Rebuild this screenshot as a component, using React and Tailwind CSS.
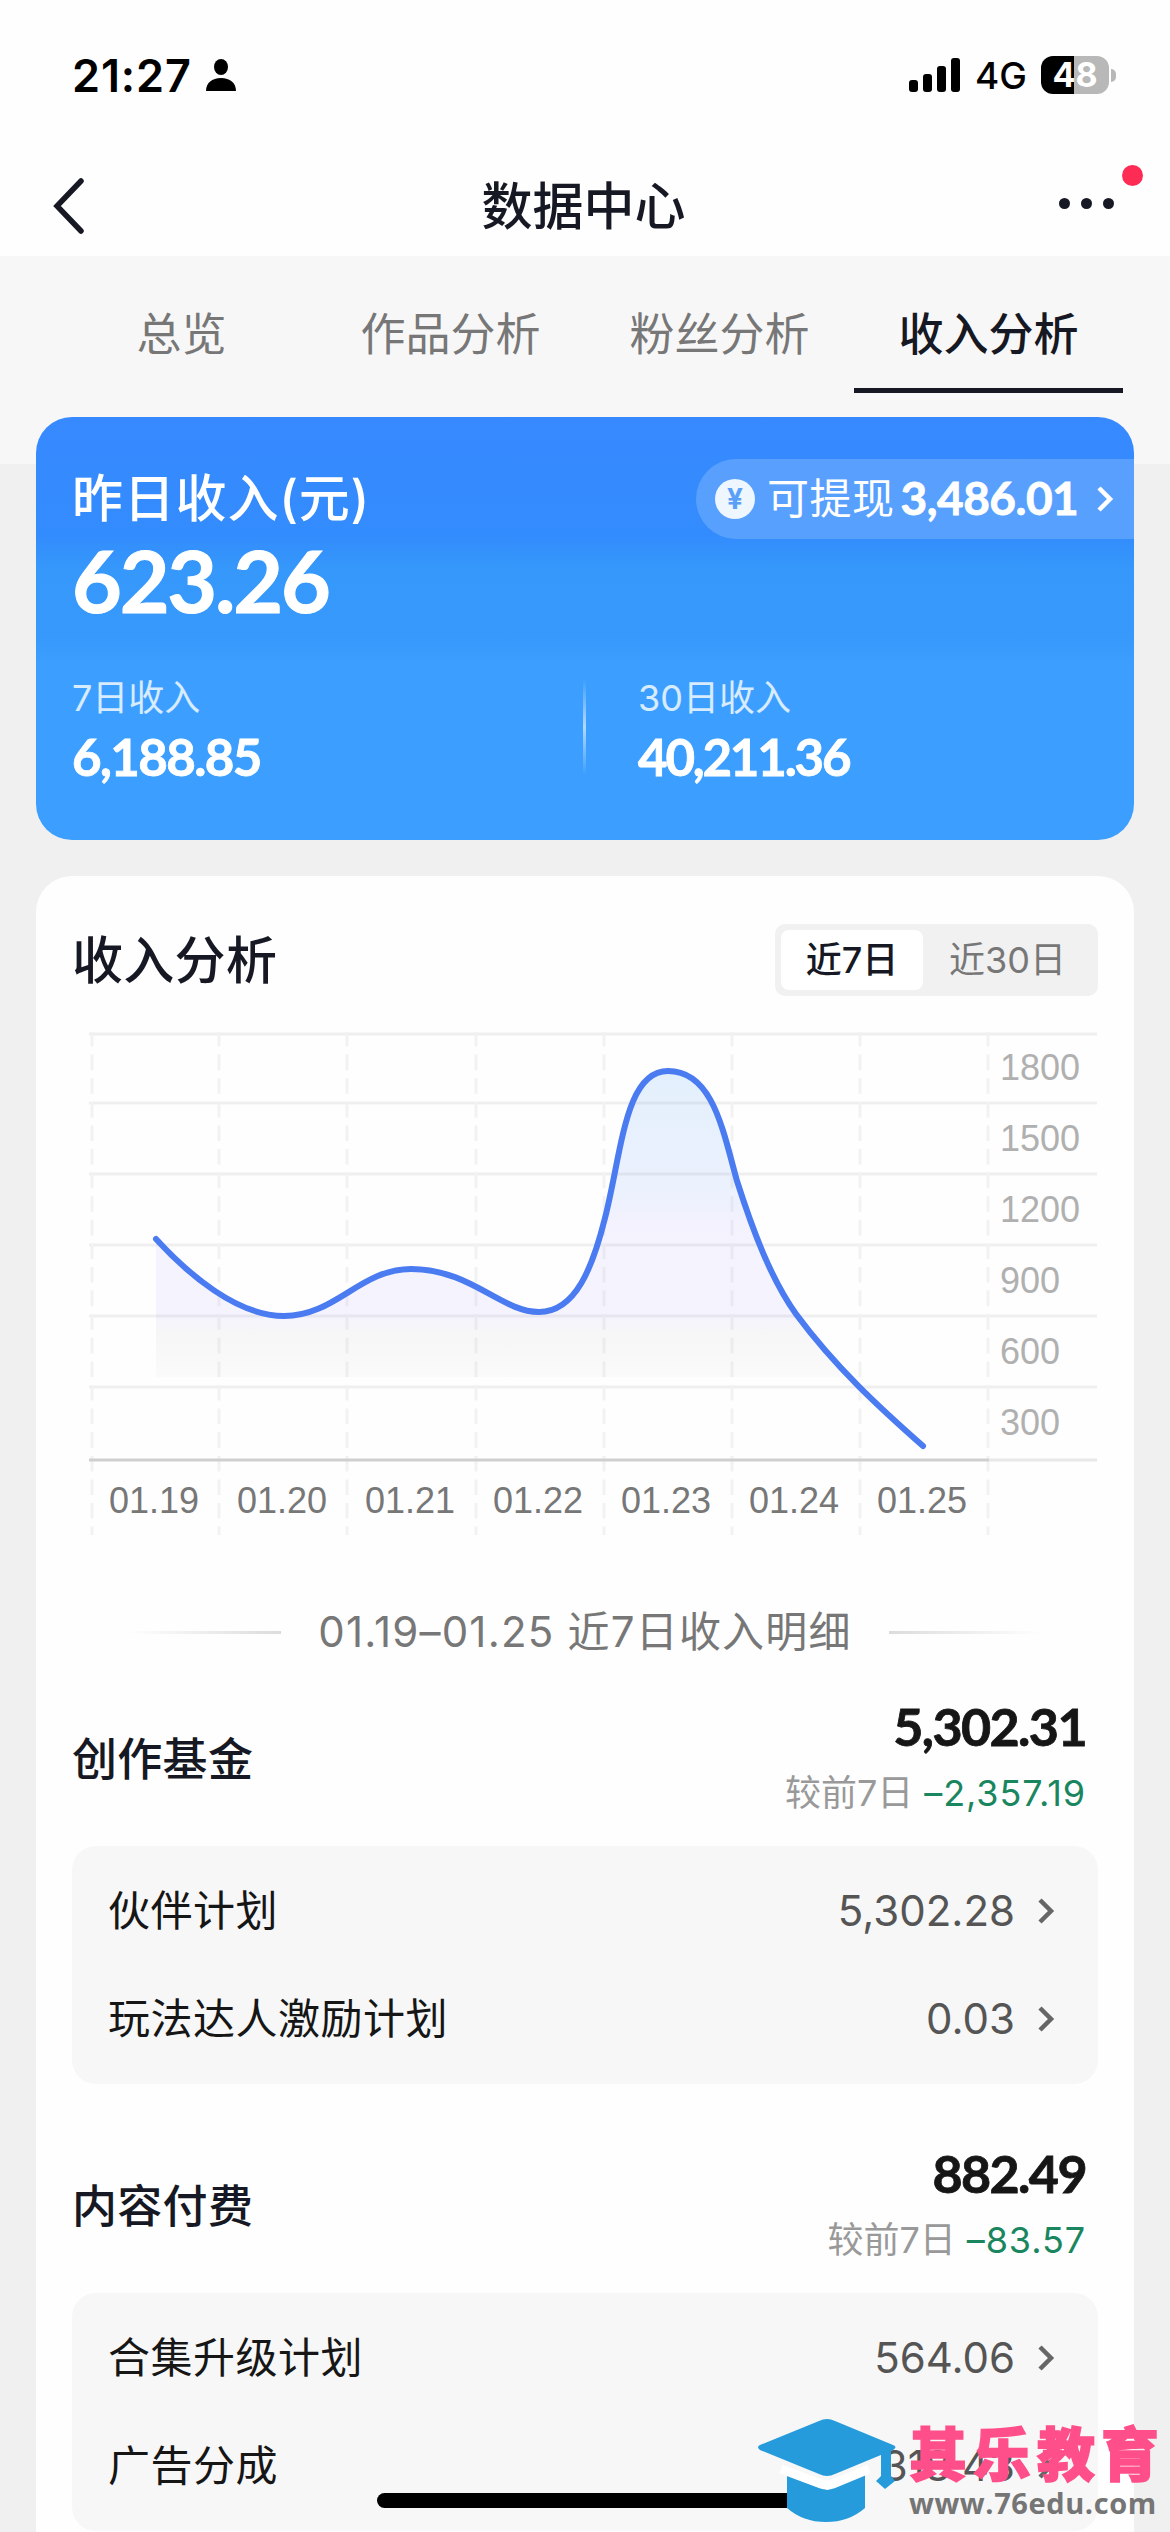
import { useState } from "react";

const tabs = ["总览", "作品分析", "粉丝分析", "收入分析"];
const ranges = ["近7日", "近30日"];

const days = ["01.19", "01.20", "01.21", "01.22", "01.23", "01.24", "01.25"];
const yTicks = [1800, 1500, 1200, 900, 600, 300];
const columnX = [3, 130, 258, 387, 515, 643, 771, 899];
const rowY = [2, 71, 142, 213, 284, 355];

const linePath =
  "M67 207 C99 242 148 284 195 284 C247 284 271 237 322 237 C382 237 412 280 450 280 C487 280 504 234 516 186 C533 119 536 39 579 39 C624 39 634 99 648 149 C664 199 682 247 707 282 C747 336 792 377 834 414";

const sections = [
  {
    title: "创作基金",
    total: "5,302.31",
    diff: "–2,357.19",
    items: [
      { name: "伙伴计划", value: "5,302.28" },
      { name: "玩法达人激励计划", value: "0.03" },
    ],
  },
  {
    title: "内容付费",
    total: "882.49",
    diff: "–83.57",
    items: [
      { name: "合集升级计划", value: "564.06" },
      { name: "广告分成", value: "318.43" },
    ],
  },
];

const Chevron = ({ className }) => (
  <svg viewBox="0 0 18 28" className={className} fill="none">
    <path d="M3 3 L14 14 L3 25" stroke="currentColor" strokeWidth="4.5" />
  </svg>
);

const StatusBar = () => (
  <div className="flex h-[150px] items-center justify-between pr-[54px] pl-[72px] text-black">
    <div className="flex items-center gap-[14px]">
      <span className="text-[45px] leading-none font-semibold tracking-[0.9px]">21:27</span>
      <svg viewBox="0 0 30 32" className="h-8 w-[30px]" fill="currentColor">
        <ellipse cx="15" cy="8" rx="7" ry="8" />
        <path d="M0 32 C0 24 6 19 15 19 C24 19 30 24 30 32 Z" />
      </svg>
    </div>
    <div className="flex items-center">
      <svg viewBox="0 0 52 34" className="mr-[14px] h-[34px] w-[52px]" fill="currentColor">
        <rect x="0" y="22" width="9" height="12" rx="3" />
        <rect x="14" y="16" width="9" height="18" rx="3" />
        <rect x="28" y="8" width="9" height="26" rx="3" />
        <rect x="42" y="0" width="9" height="34" rx="3" />
      </svg>
      <span className="mr-[14px] text-[37px] leading-none font-medium">4G</span>
      <div className="flex h-[38px] w-[68px] items-center justify-center rounded-[12px] bg-[linear-gradient(90deg,#000_33px,#b8b8b8_33px)]">
        <span className="text-[34px] leading-none font-bold text-white">48</span>
      </div>
      <div className="ml-[2px] h-[13px] w-[5px] rounded-r-full bg-[#b8b8b8]" />
    </div>
  </div>
);

const NavBar = () => (
  <div className="relative flex h-[106px] items-center pt-[6px] pr-[56px] pl-[53px] text-[#161823]">
    <div className="flex-1">
      <svg viewBox="0 0 32 56" className="h-[56px] w-8" fill="none">
        <path d="M28 3 L4 28 L28 53" stroke="currentColor" strokeWidth="5.5" strokeLinecap="round" />
      </svg>
    </div>
    <h1 className="text-[51px] leading-none font-medium">数据中心</h1>
    <div className="flex flex-1 justify-end gap-[11px] pb-[6px]">
      <span className="size-[11px] rounded-full bg-[#161823]" />
      <span className="size-[11px] rounded-full bg-[#161823]" />
      <span className="size-[11px] rounded-full bg-[#161823]" />
    </div>
    <span className="absolute top-[15px] right-[27px] size-[21px] rounded-full bg-[#fe2c55]" />
  </div>
);

const IncomeCard = () => (
  <div className="mx-9 mt-6 h-[423px] rounded-[36px] bg-[linear-gradient(180deg,#3789ff_0%,#338cfd_28%,#3598fa_36%,#3699fb_52%,#3c9fff_58%,#3c9fff_100%)] text-white">
    <div className="flex items-start justify-between pt-[42px] pl-[36px]">
      <h2 className="pt-[14px] text-[51px] leading-none font-medium tracking-[0.8px]">昨日收入(元)</h2>
      <button className="flex h-[80px] w-[438px] items-center rounded-l-full bg-white/18 pl-[19px]">
        <span className="flex size-[40px] items-center justify-center rounded-full bg-[#eef6ff] text-[28px] leading-none font-bold text-[#5aa0f8]">
          ¥
        </span>
        <span className="ml-[12px] text-[42px] leading-none tracking-[0.5px]">可提现</span>
        <span className="ml-[6px] w-[177px] pb-[2px] font-['Lato'] text-[46px] leading-none font-bold tracking-[-0.5px] [-webkit-text-stroke:0.8px_white]">
          3,486.01
        </span>
        <Chevron className="ml-[18px] h-[28px] w-[18px]" />
      </button>
    </div>
    <p className="-mt-[2px] pl-[36px] font-['Lato'] text-[86px] leading-none font-bold tracking-[-2.2px] [-webkit-text-stroke:1px_white]">
      623.26
    </p>
    <div className="mt-[57px] flex pl-[36px]">
      <div className="w-[511px]">
        <p className="text-[36px] leading-none text-white/80">7日收入</p>
        <p className="mt-[15px] font-['Lato'] text-[51px] leading-none font-bold tracking-[-1.6px] [-webkit-text-stroke:0.8px_white]">
          6,188.85
        </p>
      </div>
      <div className="-mt-[1px] h-[96px] w-[3px] bg-[linear-gradient(180deg,transparent,rgba(255,255,255,0.6),transparent)]" />
      <div className="pl-[52px]">
        <p className="text-[36px] leading-none text-white/80">30日收入</p>
        <p className="mt-[15px] font-['Lato'] text-[51px] leading-none font-bold tracking-[-2.2px] [-webkit-text-stroke:0.8px_white]">
          40,211.36
        </p>
      </div>
    </div>
  </div>
);

const IncomeChart = () => (
  <div className="relative mt-[36px] ml-[17px] h-[504px] w-[1008px] font-['Liberation_Sans']">
    <svg viewBox="0 0 1008 504" className="h-full w-full" fill="none">
      <defs>
        <linearGradient id="area" x1="0" y1="39" x2="0" y2="345" gradientUnits="userSpaceOnUse">
          <stop offset="0" stopColor="#3b98f0" stopOpacity="0.14" />
          <stop offset="0.42" stopColor="#5a8af8" stopOpacity="0.11" />
          <stop offset="0.5" stopColor="#7a6af8" stopOpacity="0.08" />
          <stop offset="0.8" stopColor="#7a6af8" stopOpacity="0.07" />
          <stop offset="0.86" stopColor="#808080" stopOpacity="0.06" />
          <stop offset="1" stopColor="#808080" stopOpacity="0.03" />
          <stop offset="1" stopColor="#808080" stopOpacity="0" />
        </linearGradient>
      </defs>
      {rowY.map((y) => (
        <path key={y} d={`M0 ${y} H1008`} stroke="#efefef" strokeWidth="3" />
      ))}
      {columnX.map((x) => (
        <path key={x} d={`M${x} 0 V503`} stroke="#f2f2f2" strokeWidth="3" strokeDasharray="15.6 8" strokeDashoffset="1" />
      ))}
      <path d="M900 428 H1008" stroke="#e8e8e8" strokeWidth="3" />
      <path d="M0 428 H900" stroke="#cfcfcf" strokeWidth="3" />
      <path d={`${linePath} L834 427 H67 Z`} fill="url(#area)" />
      <path d={linePath} stroke="#4a7bf0" strokeWidth="6" strokeLinecap="round" />
    </svg>
    <div className="absolute top-[2px] right-0 flex w-[97px] flex-col text-[36px] text-[#b0b0b0]">
      {yTicks.map((tick) => (
        <span key={tick} className="h-[71px] leading-[67px]">
          {tick}
        </span>
      ))}
    </div>
    <div className="absolute top-[449px] left-[1px] flex w-[896px] text-[36px] leading-[40px] text-[#777]">
      {days.map((day) => (
        <span key={day} className="flex-1 text-center">
          {day}
        </span>
      ))}
    </div>
  </div>
);

const Section = ({ title, total, diff, items }) => (
  <section className="h-[447px]">
    <div className="flex h-[148px] items-start justify-between pr-[12px]">
      <h3 className="pt-[39px] text-[45px] leading-none font-medium tracking-[0.3px] text-[#161823]">{title}</h3>
      <div className="flex flex-col items-end pt-[2px]">
        <span className="font-['Lato'] text-[52px] leading-none font-bold tracking-[-1.6px] text-[#161616] [-webkit-text-stroke:0.8px_#161616]">
          {total}
        </span>
        <span className="mt-[23px] flex text-[36px] leading-none">
          <span className="mr-[11px] text-[#999]">较前7日</span>
          <span className="tracking-[0.9px] text-[#1a8660]">{diff}</span>
        </span>
      </div>
    </div>
    <div className="h-[238px] rounded-[24px] bg-[#f7f7f7] px-[36px] py-[11px]">
      {items.map((item) => (
        <div key={item.name} className="flex h-[108px] items-center">
          <span className="flex-1 text-[42px] leading-none tracking-[0.5px] text-[#161616]">{item.name}</span>
          <span className="mr-[22px] text-[42px] leading-none text-[#555]">{item.value}</span>
          <Chevron className="mr-[7px] h-[28px] w-[18px] text-[#666]" />
        </div>
      ))}
    </div>
  </section>
);

const Watermark = () => (
  <div className="absolute bottom-[8px] left-[757px] flex items-start">
    <svg viewBox="0 0 140 106" className="h-[106px] w-[140px]">
      <path d="M30 55 L70 72 Q72 72 108 55 V90 Q92 104 69 104 Q46 104 30 90 Z" fill="#259bdc" />
      <path d="M24 51 L64 66 Q70 68 76 66 L112 51" stroke="#fff" strokeWidth="9" fill="none" />
      <path
        d="M3 27 L62 3 Q70 -1 78 3 L136 27 Q141 29 136 32 L78 56 Q70 60 62 56 L3 32 Q-1 29 3 27 Z"
        fill="#259bdc"
      />
      <path d="M124 36 L134 32 V58 L138 63 L128 71 L119 63 L124 58 Z" fill="#259bdc" />
    </svg>
    <div className="ml-[12px] pt-[5px]">
      <p className="text-[58px] leading-[64px] font-black tracking-[6px] text-[#ff4f8b] [-webkit-text-stroke:1.5px_#ff4f8b]">
        其乐教育
      </p>
      <p className="mt-px font-['Open_Sans'] text-[29px] leading-[30px] font-bold tracking-[0.6px] text-[#757575]">
        www.76edu.com
      </p>
    </div>
  </div>
);

const App = () => {
  const [tab, setTab] = useState("收入分析");
  const [range, setRange] = useState("近7日");

  return (
    <div className="relative h-[2532px] w-[1170px] overflow-hidden bg-[linear-gradient(180deg,#f7f7f7_464px,#f0f0f0_464px)] font-['Inter','Noto_Sans_CJK_SC',sans-serif]">
      <header className="bg-[#fefefe]">
        <StatusBar />
        <NavBar />
      </header>

      <nav className="flex h-[137px] px-[47px]">
        {tabs.map((name) => (
          <button
            key={name}
            onClick={() => setTab(name)}
            className={
              tab === name
                ? "flex-1 border-b-[5px] border-[#161823] pt-[25px] text-[45px] leading-none font-medium text-[#161823]"
                : "flex-1 border-b-[5px] border-transparent pt-[25px] text-[45px] leading-none text-[#777]"
            }
          >
            {name}
          </button>
        ))}
      </nav>

      <IncomeCard />

      <main className="mx-9 mt-9 rounded-t-[36px] bg-[#fefefe] px-9 pt-[48px]">
        <div className="flex h-[72px] items-center justify-between">
          <h2 className="text-[51px] leading-none font-medium tracking-[0.3px] text-[#161823]">收入分析</h2>
          <div className="flex h-[72px] w-[323px] rounded-[10px] bg-[#f1f1f1] p-[6px]">
            {ranges.map((name) => (
              <button
                key={name}
                onClick={() => setRange(name)}
                className={
                  range === name
                    ? "w-[142px] rounded-[8px] bg-white text-[36px] leading-none font-medium text-[#161823]"
                    : "flex-1 text-[36px] leading-none text-[#777]"
                }
              >
                {name}
              </button>
            ))}
          </div>
        </div>

        <IncomeChart />

        <div className="mt-[76px] flex h-[40px] items-center justify-center text-[42px] leading-none text-[#777]">
          <span className="h-[3px] w-[152px] bg-[linear-gradient(90deg,transparent,#dcdcdc)]" />
          <span className="mx-[37px] tracking-[1.2px]">01.19–01.25 近7日收入明细</span>
          <span className="h-[3px] w-[152px] bg-[linear-gradient(270deg,transparent,#dcdcdc)]" />
        </div>

        <div className="mt-[46px]">
          {sections.map((section) => (
            <Section key={section.title} {...section} />
          ))}
        </div>
      </main>

      <div className="absolute bottom-[24px] left-[377px] h-[15px] w-[417px] rounded-full bg-black" />
      <Watermark />
    </div>
  );
};

export default App;
